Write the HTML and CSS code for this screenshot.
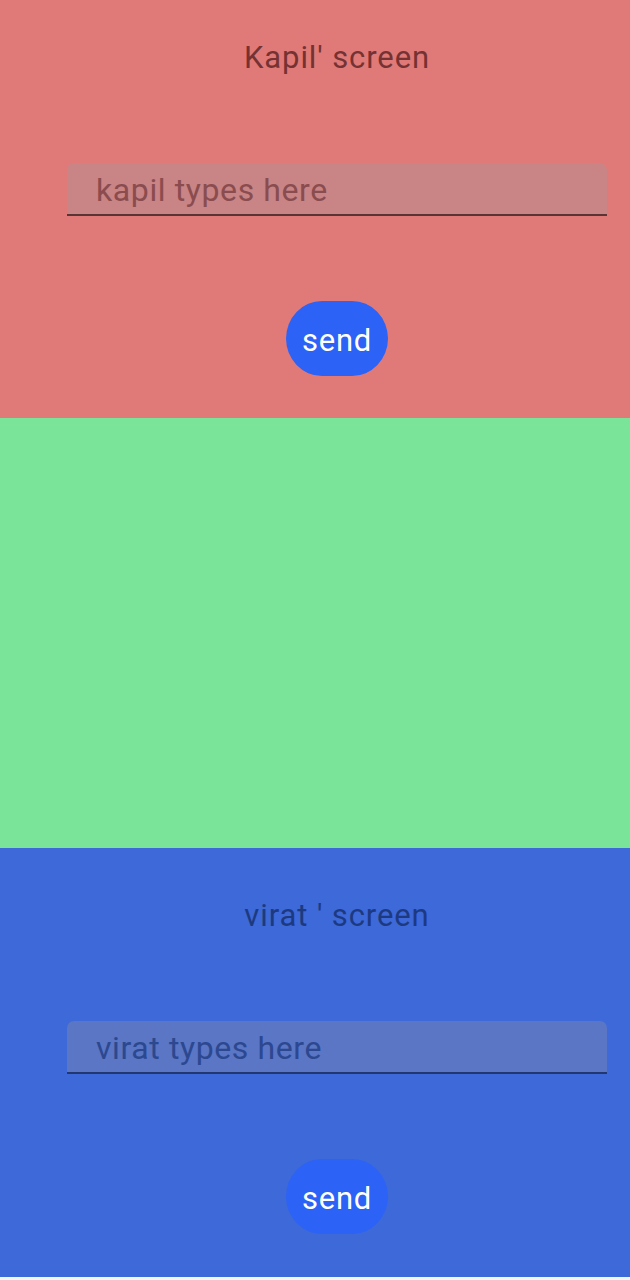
FILE: index.html
```html
<!DOCTYPE html>
<html lang="en">
<head>
<meta charset="utf-8">
<title>Screens</title>
<link rel="stylesheet" href="styles.css">
</head>
<body>
<div class="app">
  <section class="screen screen-kapil">
    <div class="content">
      <div class="title">Kapil' screen</div>
      <div class="field"><span class="placeholder">kapil types here</span></div>
      <div class="btn-row"><button class="send">send</button></div>
    </div>
  </section>
  <section class="screen screen-middle"></section>
  <section class="screen screen-virat">
    <div class="content">
      <div class="title">virat ' screen</div>
      <div class="field"><span class="placeholder">virat types here</span></div>
      <div class="btn-row"><button class="send">send</button></div>
    </div>
  </section>
  <div class="bottom-strip"></div>
</div>
</body>
</html>
```
FILE: styles.css
```css
* { box-sizing: border-box; }
html, body { margin: 0; padding: 0; }
body {
  font-family: Roboto, "Noto Sans", "Liberation Sans", sans-serif;
  background: #eef8f8;
}
.app {
  width: 630px;
  display: flex;
  flex-direction: column;
}
.screen { width: 100%; }
.screen-kapil {
  height: 418px;
  background: #e07a78;
  padding-top: 40px;
}
.screen-middle {
  height: 430px;
  background: #7ae498;
}
.screen-virat {
  height: 429px;
  background: #3e69d8;
  padding-top: 50px;
}
.bottom-strip { height: 3px; background: #eef8f8; }

.content {
  margin-left: 67px;
  width: 540px;
  display: flex;
  flex-direction: column;
}
.title {
  text-align: center;
  font-size: 31px;
  line-height: 36px;
  letter-spacing: 0.9px;
  height: 36px;
}
.screen-kapil .title { color: #743232; }
.screen-virat .title { color: #1d3a80; }

.field {
  margin-top: 87px;
  height: 53px;
  padding: 11px 0 0 29px;
  border-radius: 7px 7px 0 0;
  border-bottom: 2px solid;
}
.placeholder {
  display: block;
  font-size: 32px;
  line-height: 33px;
  letter-spacing: 0.6px;
}
.screen-kapil .field { background: #c98485; border-bottom-color: #5a3434; }
.screen-kapil .placeholder { color: #8a4c4e; }
.screen-virat .field { background: #5a76c4; border-bottom-color: #223770; }
.screen-virat .placeholder { color: #2c4890; }

.btn-row {
  margin-top: 85px;
  display: flex;
  justify-content: center;
}
.send {
  width: 102px;
  height: 75px;
  border: none;
  border-radius: 36px / 37.5px;
  background: #2c62f6;
  color: #ffffff;
  font-family: Roboto, "Noto Sans", "Liberation Sans", sans-serif;
  font-size: 31px;
  letter-spacing: 0.8px;
  padding: 4px 0 0 0;
  display: flex;
  align-items: center;
  justify-content: center;
}
```
